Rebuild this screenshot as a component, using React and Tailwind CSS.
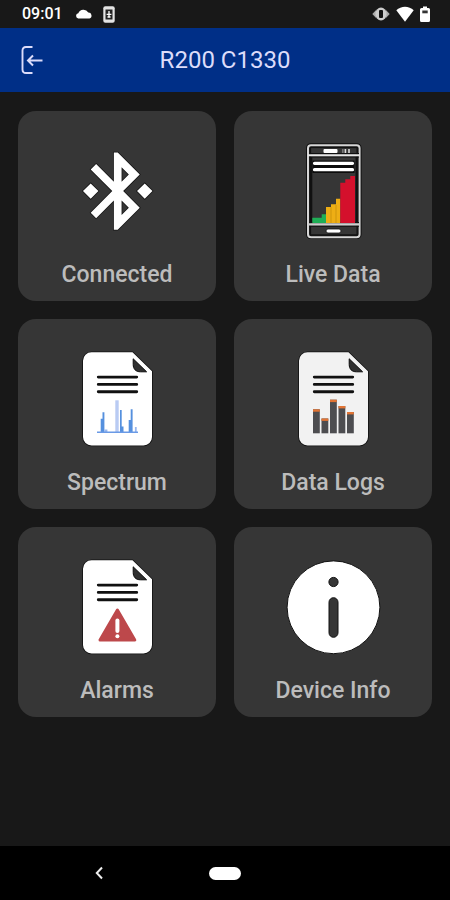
const TILES = [
  { label: 'Connected', Icon: BluetoothIcon },
  { label: 'Live Data', Icon: PhoneIcon },
  { label: 'Spectrum', Icon: SpectrumIcon },
  { label: 'Data Logs', Icon: LogsIcon },
  { label: 'Alarms', Icon: AlarmsIcon },
  { label: 'Device Info', Icon: InfoIcon },
]

const LOG_BARS = [
  { x: 28, top: 58.3 },
  { x: 36.5, top: 67.5 },
  { x: 45, top: 48.7 },
  { x: 53.5, top: 55 },
  { x: 62, top: 61 },
]

function BluetoothIcon() {
  return (
    <svg viewBox="0 0 96 96" className="h-24 w-24" aria-hidden="true">
      <path
        transform="translate(2.4 1.8) scale(3.86)"
        fill="#fff"
        stroke="#151515"
        strokeWidth="0.4"
        paintOrder="stroke"
        d="M7 12l-2-2-2 2 2 2 2-2zm10.71-4.29L12 2h-1v7.59L6.41 5 5 6.41 10.59 12 5 17.59 6.41 19 11 14.41V22h1l5.71-5.71-4.3-4.29 4.3-4.29zM13 5.83l1.88 1.88L13 9.59V5.83zm1.88 10.46L13 18.17v-3.76l1.88 1.88zM19 10l-2 2 2 2 2-2-2-2z"
      />
    </svg>
  )
}

function PhoneIcon() {
  return (
    <svg viewBox="0 0 96 96" className="h-24 w-24" aria-hidden="true">
      <rect x="22.8" y="2" width="52" height="92.4" rx="3" fill="#363636" stroke="#111" strokeWidth="3.6" />
      <rect x="25.4" y="4.4" width="46.8" height="87.6" fill="none" stroke="#111" strokeWidth="1.4" />
      <rect x="23" y="2.2" width="51.6" height="92" rx="3" fill="none" stroke="#d6d6d6" strokeWidth="2" />
      <path d="M24 10.7h50M24 14h50M24 79.6h50M24 83.2h50" stroke="#111" strokeWidth="1.2" />
      <path d="M23 12.3h51.6" stroke="#e6e6e6" strokeWidth="1.9" />
      <path d="M23 81.4h51.6" stroke="#cfcfcf" strokeWidth="2.4" />
      <path d="M26.5 14v65M71.3 14v65" stroke="#111" strokeWidth="1.6" />
      <rect x="38.5" y="6" width="14" height="4" rx="1" fill="#fff" />
      <path d="M57.8 6v4" stroke="#777" strokeWidth="1.6" />
      <path d="M60.4 6v4M64 6v4" stroke="#ddd" strokeWidth="1.6" />
      <path d="M27.5 17.5h42v12.5h-42z" fill="#0c0c0c" />
      <path d="M29.5 20.3h38M29.5 26.7h38" stroke="#fff" strokeWidth="3.2" strokeLinecap="round" />
      <path d="M27.3 80v-5.3h9.4v-3.5H41V80z" fill="#1faf56" />
      <path d="M41 80V64h5v-2.7h5v-5.5h4.4V80z" fill="#eeae15" />
      <path d="M46 64v16M51 62v18" stroke="#b98309" strokeWidth="0.6" />
      <path d="M55.3 80V39.7h5v-3.4h5V33H70v47z" fill="#d4102c" />
      <rect x="41" y="86" width="15" height="4" rx="2" fill="#fff" stroke="#111" strokeWidth="0.8" />
    </svg>
  )
}

function DocumentIcon({ fill = '#fff', children }) {
  return (
    <svg viewBox="0 0 96 96" className="h-24 w-24" aria-hidden="true">
      <path
        d="M22.5 1.3H63.5L83 20.3V86a8.5 8.5 0 0 1-8.5 8.5h-52A8.5 8.5 0 0 1 14 86V9.8a8.5 8.5 0 0 1 8.5-8.5z"
        fill={fill}
        stroke="#111"
        strokeWidth="1.6"
        paintOrder="stroke"
      />
      <path d="M64.2 7.8L77.6 20.8h-6.2c-4.6 0-7.2-2.8-7.2-7.4z" fill="#303030" stroke="#0c0c0c" strokeWidth="1" />
      <path d="M29.3 26.1h38.4M29.3 33.4h38.4M29.3 40.7h38.4" stroke="#111" strokeWidth="2.9" strokeLinecap="round" />
      {children}
    </svg>
  )
}

function SpectrumIcon() {
  return (
    <DocumentIcon>
      <path d="M46.3 49.3h3.4V81h-3.4z" fill="#b9cbf3" />
      <path d="M31.7 81V67.7h1.8v-6.4h1.9V81zM51 81V59h1.7v16.5h1.8V81zM59.7 81V69h2V58.3h1.9V81z" fill="#5590de" />
      <path d="M35.4 81v-2.5h3V81zM65.9 81v-5h1.8v5z" fill="#9ab8ef" />
      <path d="M28 81.3h41" stroke="#6a9ae6" strokeWidth="1.6" />
    </DocumentIcon>
  )
}

function LogsIcon() {
  return (
    <DocumentIcon fill="#f2f2f2">
      {LOG_BARS.map(({ x, top }) => (
        <g key={x}>
          <rect x={x} y={top} width="6.8" height={82.3 - top} fill="#4d4d50" />
          <rect x={x} y={top} width="6.8" height="2.4" fill="#e27434" />
        </g>
      ))}
    </DocumentIcon>
  )
}

function AlarmsIcon() {
  return (
    <DocumentIcon>
      <path
        d="M48.4 51L65.8 81H31z"
        fill="#bd484b"
        stroke="#bd484b"
        strokeWidth="3"
        strokeLinejoin="round"
      />
      <path d="M48.4 61.5v10.5" stroke="#fff" strokeWidth="4" strokeLinecap="round" />
      <circle cx="48.4" cy="77.3" r="2" fill="#fff" />
    </DocumentIcon>
  )
}

function InfoIcon() {
  return (
    <svg viewBox="0 0 96 96" className="h-24 w-24" aria-hidden="true">
      <circle cx="48.5" cy="48.3" r="46.4" fill="#fff" stroke="#111" strokeWidth="1" />
      <circle cx="48.5" cy="23" r="4.6" fill="#363636" stroke="#111" strokeWidth="1" />
      <rect x="44" y="38.7" width="9" height="39.6" rx="4.5" fill="#363636" stroke="#111" strokeWidth="1" />
    </svg>
  )
}

function StatusBar() {
  return (
    <div className="flex h-7 items-center justify-between pr-5 pl-[22px] text-white">
      <div className="flex items-center">
        <span className="text-base leading-7 font-medium">09:01</span>
        <svg viewBox="0 0 18 10" className="ml-3 h-[10px] w-[18px]" aria-hidden="true">
          <path d="M3.2 9.5A2.7 2.7 0 0 1 3.3 4.2 5.7 5.7 0 0 1 13.3 3.5 3.1 3.1 0 0 1 14.5 9.5z" fill="#fff" />
        </svg>
        <svg viewBox="0 0 12 17" className="ml-[10px] h-[17px] w-3" aria-hidden="true">
          <rect x="0.3" y="0.3" width="11.4" height="16.4" rx="2" fill="#e4e4e4" />
          <rect x="2.5" y="3.5" width="7" height="10" fill="#222" />
          <path d="M6 5v6M3.6 8.3h4.8M4.5 11h3" stroke="#fff" strokeWidth="1.3" />
        </svg>
      </div>
      <div className="flex items-center gap-[6px]">
        <svg viewBox="0 0 18 14" className="h-[14px] w-[18px]" aria-hidden="true">
          <path d="M0.3 7L4.5 2.5v9zM17.7 7L13.500 2.5v9z" fill="#aaa" />
          <ellipse cx="9" cy="7" rx="5.6" ry="6.4" fill="#ccc" />
          <rect x="7" y="3" width="4" height="8" rx="1" fill="#111" />
        </svg>
        <svg viewBox="0 0 18 16" className="h-4 w-[18px]" aria-hidden="true">
          <path d="M9 15.7L0.3 4.3C5 -0.4 13 -0.4 17.7 4.3z" fill="#fff" />
        </svg>
        <svg viewBox="0 0 10 16" className="h-4 w-[10px]" aria-hidden="true">
          <path d="M1.5 2H3V0.5h4V2h1.5Q10 2 10 3.5v11Q10 16 8.5 16h-7Q0 16 0 14.5v-11Q0 2 1.5 2z" fill="#fff" />
          <path d="M2.3 4.5h5.4v2.8H2.3z" fill="#333" />
        </svg>
      </div>
    </div>
  )
}

function Header() {
  return (
    <header className="grid h-16 grid-cols-[1fr_auto_1fr] items-center bg-[#002f87] px-5 text-[#dcdcfa]">
      <button type="button" aria-label="Back" className="justify-self-start">
        <svg viewBox="0 0 24 30" className="h-[30px] w-6" fill="none" stroke="currentColor" aria-hidden="true">
          <path d="M12.5 2H6Q2.5 2 2.5 5.5v19Q2.5 28 6 28h6.5" strokeWidth="1.9" />
          <path d="M22.5 15.5H8.5M13 10.5L8 15.5l5 5" strokeWidth="2" />
        </svg>
      </button>
      <h1 className="text-2xl leading-8">R200 C1330</h1>
    </header>
  )
}

function Tile({ label, Icon }) {
  return (
    <button
      type="button"
      className="flex h-[190px] flex-col items-center rounded-[18px] bg-[#363636] pt-8 text-[#bcbcbc]"
    >
      <Icon />
      <span className="mt-5 text-[23px] leading-8 font-medium">{label}</span>
    </button>
  )
}

function NavBar() {
  return (
    <nav className="grid h-[54px] grid-cols-3 items-center justify-items-center bg-black px-9">
      <button type="button" aria-label="Navigate back">
        <svg viewBox="0 0 8 14" className="h-[14px] w-2" aria-hidden="true">
          <path d="M7 1.5L1.8 7 7 12.5" fill="none" stroke="#eee" strokeWidth="2" />
        </svg>
      </button>
      <button type="button" aria-label="Home" className="h-[13px] w-8 rounded-full bg-white" />
    </nav>
  )
}

export default function App() {
  return (
    <div className="flex min-h-screen flex-col bg-[#181818] font-[Roboto,sans-serif]">
      <StatusBar />
      <Header />
      <main className="grid flex-1 grid-cols-2 content-start gap-[18px] px-[18px] pt-[19px] pb-5">
        {TILES.map((tile) => (
          <Tile key={tile.label} {...tile} />
        ))}
      </main>
      <NavBar />
    </div>
  )
}
